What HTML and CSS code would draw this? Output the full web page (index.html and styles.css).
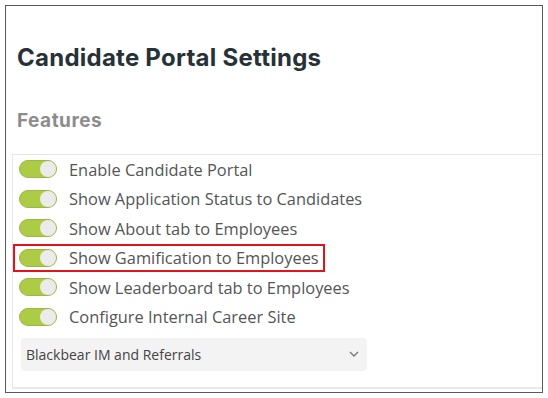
FILE: index.html
```html
<!DOCTYPE html>
<html lang="en">
<head>
    <meta charset="UTF-8">
    <title>Candidate Portal Settings</title>
    <link rel="stylesheet" href="styles.css">
</head>
<body>

<div class="frame">
    <h1 class="page-title">Candidate Portal Settings</h1>
    <h2 class="section-title">Features</h2>

    <div class="panel">
        <div class="feature-list">
            <label class="feature"><span class="toggle"></span>Enable Candidate Portal</label>
            <label class="feature"><span class="toggle"></span>Show Application Status to Candidates</label>
            <label class="feature"><span class="toggle"></span>Show About tab to Employees</label>
            <!-- highlighted row -->
            <label class="feature highlight"><span class="toggle"></span>Show Gamification to Employees</label>
            <label class="feature"><span class="toggle"></span>Show Leaderboard tab to Employees</label>
            <label class="feature"><span class="toggle"></span>Configure Internal Career Site</label>
        </div>

        <div class="select">
            <span>Blackbear IM and Referrals</span>
            <svg class="chevron" width="10" height="6" viewBox="0 0 10 6">
                <path d="M1 1 L5 5 L9 1" fill="none" stroke="#777" stroke-width="1.3"/>
            </svg>
        </div>
    </div>
</div>

</body>
</html>
```

FILE: styles.css
```css
* {
    box-sizing: border-box;
}

body {
    margin: 0;
    background: #fff;
    font-family: "Open Sans", Arial, sans-serif;
}

.frame {
    margin: 5px;
    width: 538px;
    height: 388px;
    border: 1px solid #5a5a5a;
    padding-left: 6px;
}

.page-title {
    margin: 0;
    padding: 35px 0 0 5px;
    font-family: Inter, "Noto Sans", sans-serif;
    font-weight: 700;
    font-size: 24px;
    line-height: 34px;
    letter-spacing: 0.25px;
    color: #263238;
}

.section-title {
    margin: 0;
    padding: 33px 0 0 5px;
    font-family: Inter, "Noto Sans", sans-serif;
    font-weight: 700;
    font-size: 19px;
    line-height: 26px;
    letter-spacing: 0.5px;
    color: #8c8c8c;
}

.panel {
    margin-top: 20px;
    border-top: 1px solid #e6e6e6;
    border-left: 1px solid #e6e6e6;
    border-bottom: 2px solid #e9e9e9;
    padding-bottom: 16px;
}

.feature-list {
    display: flex;
    flex-direction: column;
    gap: 1.5px;
}

.feature {
    display: flex;
    align-items: center;
    width: fit-content;
    height: 28px;
    padding: 0 4px;
    border: 2px solid transparent;
    font-size: 16.4px;
    color: #555;
}

.feature.highlight {
    border-color: #e0141a;
}

.toggle {
    position: relative;
    width: 38px;
    height: 18px;
    margin-right: 12px;
    border-radius: 9px;
    background: #aecb45;
    border: 1px solid #9db54a;
}

.toggle::after {
    content: "";
    position: absolute;
    right: 0;
    top: 0;
    width: 16px;
    height: 16px;
    border-radius: 50%;
    background: #ebebeb;
}

.select {
    display: flex;
    align-items: center;
    justify-content: space-between;
    width: 346px;
    height: 33px;
    margin: 7px 0 0 8px;
    padding: 0 5px;
    border-radius: 4px;
    background: #f3f3f3;
    font-size: 14px;
    color: #444;
}

.chevron {
    margin-right: 3px;
}
```
